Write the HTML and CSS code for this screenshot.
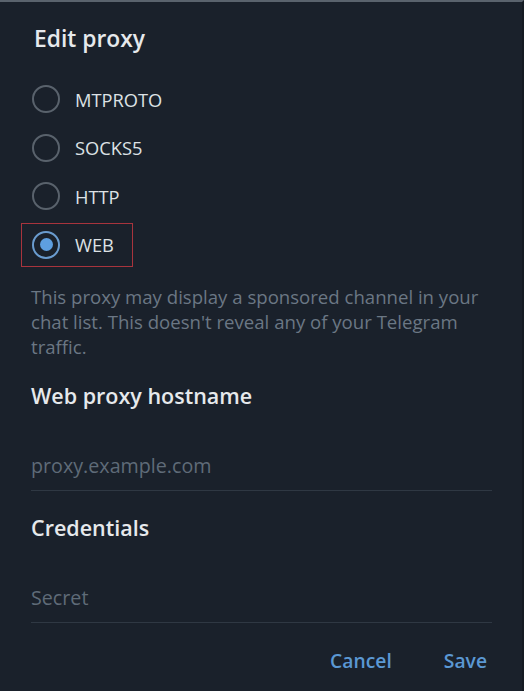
FILE: index.html
```html
<!DOCTYPE html>
<html>
<head>
<meta charset="utf-8">
<link rel="stylesheet" href="styles.css">
</head>
<body>
<div class="dialog">
  <h1 class="title">Edit proxy</h1>
  <div class="options">
    <div class="option"><span class="radio"></span><span class="label">MTPROTO</span></div>
    <div class="option"><span class="radio"></span><span class="label">SOCKS5</span></div>
    <div class="option"><span class="radio"></span><span class="label">HTTP</span></div>
    <div class="option selected"><span class="radio"><span class="dot"></span></span><span class="label">WEB</span></div>
  </div>
  <p class="about">This proxy may display a sponsored channel in your chat list. This doesn't reveal any of your Telegram traffic.</p>
  <h2 class="section">Web proxy hostname</h2>
  <div class="field"><span class="placeholder">proxy.example.com</span></div>
  <h2 class="section">Credentials</h2>
  <div class="field"><span class="placeholder">Secret</span></div>
  <div class="actions">
    <span class="btn">Cancel</span>
    <span class="btn">Save</span>
  </div>
</div>
</body>
</html>
```
FILE: styles.css
```css
html, body {
  margin: 0;
  padding: 0;
  background: #1a212b;
}
body {
  font-family: "Open Sans", "Noto Sans", sans-serif;
  width: 524px;
  height: 691px;
  overflow: hidden;
}
.dialog {
  box-sizing: border-box;
  height: 691px;
  border-top: 2px solid #5a636d;
  border-right: 2px solid #141a22;
  padding: 0 31px;
}
.title {
  margin: 22px 0 0 3px;
  font-size: 22.8px;
  font-weight: 600;
  line-height: 30px;
  color: #e6e9ec;
}
.options {
  display: flex;
  flex-direction: column;
  margin-top: 20.75px;
}
.option {
  display: flex;
  align-items: center;
  height: 48.5px;
  position: relative;
}
.radio {
  box-sizing: border-box;
  width: 28px;
  height: 28px;
  margin-left: 1px;
  border: 2px solid #59626c;
  border-radius: 50%;
  display: flex;
  align-items: center;
  justify-content: center;
}
.label {
  margin-left: 15px;
  font-size: 18.3px;
  color: #dde1e5;
}
.selected .radio {
  border: 2.5px solid #6a9ccf;
}
.dot {
  width: 13px;
  height: 13px;
  border-radius: 50%;
  background: #5e9fe0;
}
.selected::before {
  content: "";
  position: absolute;
  left: -10px;
  top: 3px;
  width: 110px;
  height: 42px;
  border: 1px solid #a8343d;
}
.about {
  margin: 14.75px 0 0 0;
  font-size: 18.6px;
  line-height: 25px;
  color: #6b7784;
}
.section {
  margin: 22.5px 0 0 0;
  font-size: 21.5px;
  font-weight: 600;
  line-height: 30px;
  color: #e6e9ec;
}
.field {
  box-sizing: content-box;
  margin-top: 41px;
  height: 38px;
  border-bottom: 1px solid #2f3843;
  width: 461px;
}
.placeholder {
  display: block;
  font-size: 19.7px;
  line-height: 28px;
  color: #5f6b78;
}
.field + .section {
  margin-top: 22px;
}
.actions {
  display: flex;
  justify-content: flex-end;
  gap: 52px;
  margin-top: 24px;
  padding-right: 4px;
}
.btn {
  font-size: 19.3px;
  font-weight: 600;
  color: #5b98d3;
  line-height: 28px;
}
```
